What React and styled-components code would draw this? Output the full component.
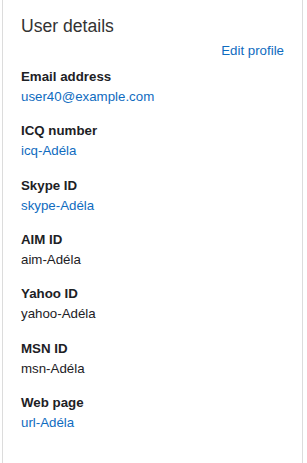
import React from "react";
import styled, { createGlobalStyle } from "styled-components";

const GlobalStyle = createGlobalStyle`
  html, body {
    margin: 0;
    padding: 0;
    background: #fff;
  }
  body {
    font-family: "Liberation Sans", Arial, sans-serif;
    font-size: 13.3px;
    color: #1d2125;
  }
`;

const Page = styled.div`
  padding: 0 4px 0 2px;
  height: 463px;
  overflow: hidden;
`;

const Card = styled.section`
  margin-top: -1px;
  min-height: 480px;
  border: 1px solid #dcdcdc;
  background: #fff;
  padding: 16px 18px 0 18px;
  box-sizing: border-box;
`;

const Title = styled.h3`
  margin: 0;
  font-size: 17.6px;
  font-weight: 400;
  line-height: 21px;
  color: #333;
`;

const Actions = styled.div`
  display: flex;
  justify-content: flex-end;
  margin-top: 4px;
  line-height: 20px;
`;

const Link = styled.a`
  color: #0f6cbf;
  text-decoration: none;
`;

const List = styled.dl`
  margin: 6px 0 0 0;
  line-height: 20px;
`;

const Item = styled.div`
  margin-bottom: 14.33px;
`;

const Label = styled.dt`
  font-weight: 700;
  color: #1d2125;
`;

const Value = styled.dd`
  margin: 0;
  color: ${(p) => (p.$link ? "#0f6cbf" : "#1d2125")};
`;

const details = [
  { label: "Email address", value: "user40@example.com", link: true },
  { label: "ICQ number", value: "icq-Adéla", link: true },
  { label: "Skype ID", value: "skype-Adéla", link: true },
  { label: "AIM ID", value: "aim-Adéla" },
  { label: "Yahoo ID", value: "yahoo-Adéla" },
  { label: "MSN ID", value: "msn-Adéla" },
  { label: "Web page", value: "url-Adéla", link: true },
];

export default function App() {
  return (
    <>
      <GlobalStyle />
      <Page>
        <Card>
          <Title>User details</Title>
          <Actions>
            <Link href="#">Edit profile</Link>
          </Actions>
          <List>
            {details.map((d) => (
              <Item key={d.label}>
                <Label>{d.label}</Label>
                <Value $link={d.link}>{d.value}</Value>
              </Item>
            ))}
          </List>
        </Card>
      </Page>
    </>
  );
}
